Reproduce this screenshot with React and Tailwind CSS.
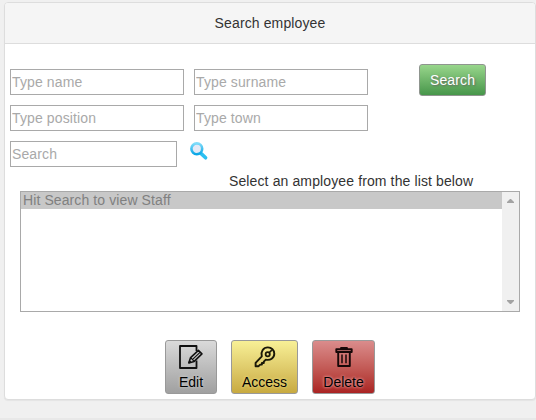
const fieldClass =
  "h-[26px] rounded-none border border-[#a9a9a9] bg-white px-px text-[14px] tracking-[0.12px] text-[#333] outline-none placeholder:text-[#a9a9a9]";

function Field({ placeholder, narrow }) {
  return (
    <input
      type="text"
      placeholder={placeholder}
      aria-label={placeholder}
      className={`${fieldClass} ${narrow ? "w-[167px]" : "w-[174px]"}`}
    />
  );
}

function MagnifierIcon() {
  return (
    <svg width="20" height="20" viewBox="0 0 20 20" fill="none">
      <defs>
        <linearGradient id="rim" x1="0" y1="0" x2="0" y2="1">
          <stop offset="0" stopColor="#7fdcfa" />
          <stop offset="1" stopColor="#0ba6e6" />
        </linearGradient>
      </defs>
      <path d="M12.2 12.6 L16.6 16.8" stroke="#2cc0f2" strokeWidth="3.6" strokeLinecap="round" />
      <circle cx="7.8" cy="7.8" r="5.4" fill="#e4e9f6" stroke="url(#rim)" strokeWidth="2.6" />
    </svg>
  );
}

function EditIcon() {
  return (
    <svg width="24" height="24" viewBox="0 0 24 24" fill="none" stroke="#111" strokeWidth="1.8" strokeLinejoin="round">
      <path d="M17.5 6V1H1V23H17.5V15.5" />
      <path d="M9.8 17.9L11.6 12.6L19.4 5.4L22.9 8.9L15.2 16.4Z" strokeWidth="1.6" />
      <path d="M11.6 12.6L15.2 16.4M13.6 14.4L21 7.4" strokeWidth="1.2" />
      <path d="M9.8 17.9L10.6 15.6L12.2 17.2Z" fill="#111" strokeWidth="1" />
    </svg>
  );
}

function KeyIcon() {
  return (
    <svg width="22" height="22" viewBox="0 0 22 22" fill="none" stroke="#1a1808" strokeWidth="1.9" strokeLinejoin="round">
      <path d="M7.8 10.4C6.4 6 9.2 1.4 13.9 1.4C17.5 1.4 20.3 4.2 20.3 7.7C20.3 11.9 16.2 14.8 11.8 13.6L9.8 15.6V17H7.9V18.6H6.2L4.6 20.2H1.6V16.9Z" />
      <circle cx="13.7" cy="8.2" r="2.1" strokeWidth="1.8" />
      <path d="M15.1 6.8L17.8 4.1" strokeWidth="1.6" />
    </svg>
  );
}

function TrashIcon() {
  return (
    <svg width="18" height="20" viewBox="0 0 18 20" fill="none" stroke="#170808" strokeWidth="1.9" strokeLinejoin="round">
      <path d="M6 2V1H12V2" strokeWidth="1.8" />
      <path d="M1.3 2.2H16.7V5H1.3Z" />
      <path d="M3.2 5V19H14.8V5" />
      <path d="M7 7.5V16.2M11 7.5V16.2" strokeWidth="1.5" />
    </svg>
  );
}

function ActionButton({ label, icon, className }) {
  return (
    <button
      type="button"
      className={`flex h-[54px] flex-col items-center rounded-[3px] border border-[#999] bg-linear-to-b text-[14px] leading-[16px] text-black ${className}`}
    >
      <span className="mt-1 flex h-6 items-center justify-center">{icon}</span>
      <span className="mt-[5px]">{label}</span>
    </button>
  );
}

export default function App() {
  return (
    <div className="h-[420px] w-[536px] overflow-hidden border-b-2 border-[#e8e8e8] bg-[#f0f0f0] pt-[2px] pl-1 font-['Liberation_Sans',Arial,sans-serif] text-[14px] leading-[16px] text-[#333]">
      <section className="h-[398px] w-[532px] rounded-[4px] border border-[#ddd] bg-white shadow-[0_1px_1px_rgba(0,0,0,0.05)]">
        <header className="flex h-[41px] items-center justify-center rounded-t-[3px] border-b border-[#ddd] bg-[#f5f5f5]">
          <h1 className="tracking-[0.12px]">Search employee</h1>
        </header>
        <div className="flex h-[97px] items-start pt-5 pl-[5px]">
          <div className="mt-[5px] grid grid-cols-[174px_174px] gap-[10px]">
            <Field placeholder="Type name" />
            <Field placeholder="Type surname" />
            <Field placeholder="Type position" />
            <Field placeholder="Type town" />
          </div>
          <button
            type="button"
            className="ml-[51px] h-8 w-[67px] rounded-[3px] border border-[#8f958f] bg-linear-to-b from-[#98d68c] to-[#46964a] text-[14px] tracking-[0.12px] text-white [text-shadow:1px_1px_2px_#666]"
          >
            Search
          </button>
        </div>
        <div className="flex h-[32px] items-start pl-[5px]">
          <Field placeholder="Search" narrow />
          <button type="button" aria-label="Find" className="ml-[12px]">
            <MagnifierIcon />
          </button>
        </div>
        <p className="h-[18px] pl-[224px] tracking-[0.12px] whitespace-nowrap">Select an amployee from the list below</p>
        <div className="ml-[15px] flex h-[121px] w-[500px] border border-[#a9a9a9] bg-white">
          <ul className="flex-1">
            <li className="h-[17px] bg-[#c8c8c8] pl-[2px] tracking-[0.1px] text-[#808080]">Hit Search to view Staff</li>
          </ul>
          <div className="flex w-[17px] flex-col items-center justify-between bg-[#f0f0f0] py-[7px]">
            <svg width="7" height="4" viewBox="0 0 7 4" fill="#a3a3a3">
              <path d="M3 0h1l3 3v1H0V3z" />
            </svg>
            <svg width="7" height="4" viewBox="0 0 7 4" fill="#a3a3a3">
              <path d="M0 0h7v1L4 4H3L0 1z" />
            </svg>
          </div>
        </div>
        <div className="mt-7 ml-[160px] flex">
          <ActionButton
            label="Edit"
            icon={<EditIcon />}
            className="w-[52px] from-[#dadada] to-[#a0a0a0] [text-shadow:0_0_3px_#ddd]"
          />
          <ActionButton
            label="Access"
            icon={<KeyIcon />}
            className="ml-[14px] w-[67px] from-[#f8f096] to-[#c8aa40] [text-shadow:0_0_3px_#f4e890]"
          />
          <ActionButton
            label="Delete"
            icon={<TrashIcon />}
            className="ml-[14px] w-[63px] from-[#da8c8c] to-[#aa2222] [text-shadow:0_0_3px_#e8a0a0,0_0_3px_#e09090]"
          />
        </div>
      </section>
    </div>
  );
}
